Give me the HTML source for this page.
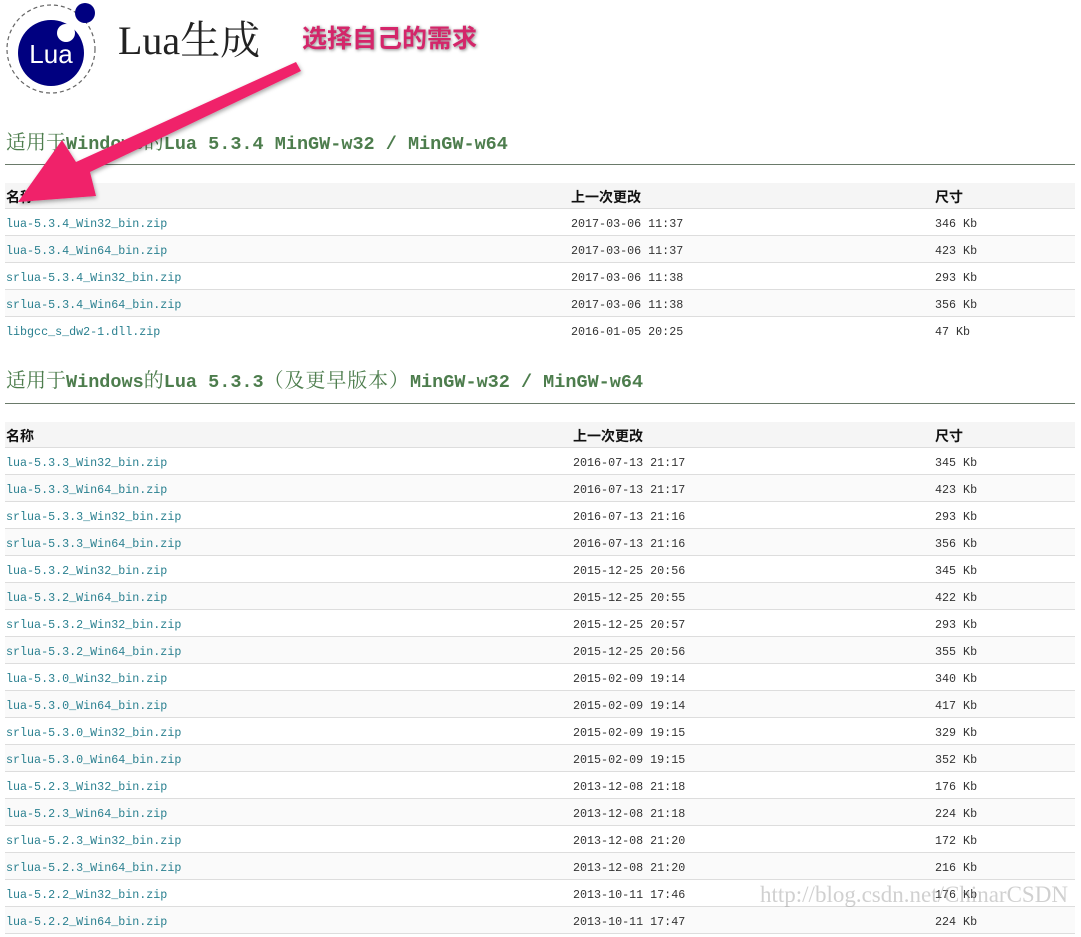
<!DOCTYPE html>
<html><head><meta charset="utf-8"><style>
body{margin:0;width:1081px;height:918px;background:#fff;position:relative;overflow:hidden;font-family:"Liberation Mono","Noto Sans CJK SC",monospace}
.a{position:absolute}
.h{font-family:"Liberation Mono","Noto Serif CJK SC",monospace;color:#4d7d4d;font-size:18.5px;font-weight:bold;left:6px;white-space:nowrap;letter-spacing:0}
.h i{font-style:normal;font-weight:normal;font-size:20px}
.h b{font-weight:normal;font-size:20px;letter-spacing:0.9px}
.hr{left:5px;width:1070px;height:1px;background:#6a7a6a}
.th{left:5px;width:1070px;height:25px;background:#f5f5f5;border-bottom:1px solid #ddd;font-family:"Noto Sans CJK SC",sans-serif;font-size:14px;font-weight:bold;color:#111}
.th span,.r span{position:absolute;top:0;white-space:nowrap}
.r span{line-height:30px}
.th span{font-weight:bold;line-height:28px}
.r{left:5px;width:1070px;height:26px;border-bottom:1px solid #ddd;font-size:11.7px;color:#333}
.r span:first-child{color:#2a8090}
</style></head><body>
<svg class="a" style="left:0;top:0" width="110" height="100">
<circle cx="51" cy="49" r="44" fill="none" stroke="#666" stroke-width="1.2" stroke-dasharray="4 3"/>
<circle cx="51" cy="53" r="33" fill="#000080"/>
<circle cx="66" cy="33" r="9" fill="#fff"/>
<circle cx="85" cy="13" r="10" fill="#000080"/>
<text x="51" y="63" text-anchor="middle" font-family="Liberation Sans,sans-serif" font-size="26" fill="#fff">Lua</text>
</svg>
<div class="a" style="left:118px;top:16px;font-family:'Liberation Serif','Noto Serif CJK SC',serif;font-size:40px;color:#222;line-height:50px">Lua生成</div>
<div class="a" style="left:302px;top:20px;font-family:'Noto Sans CJK SC',sans-serif;font-weight:bold;font-size:25px;color:#d4266a;line-height:34px;text-shadow:1px 1px 3px #888">选择自己的需求</div>

<div class="a h" style="top:132px;line-height:26px"><i>适用于</i>Windows<i>的</i>Lua 5.3.4 MinGW-w32 / MinGW-w64</div>
<div class="a hr" style="top:164px"></div>
<div class="a th" style="top:183px"><span style="left:1px">名称</span><span style="left:566px">上一次更改</span><span style="left:930px">尺寸</span></div>
<div class="a" style="left:0;top:209px">
<div class="r a" style="top:0"><span style="left:1px">lua-5.3.4_Win32_bin.zip</span><span style="left:566px">2017-03-06 11:37</span><span style="left:930px">346 Kb</span></div>
<div class="r a" style="top:27px;background:#fafafa"><span style="left:1px">lua-5.3.4_Win64_bin.zip</span><span style="left:566px">2017-03-06 11:37</span><span style="left:930px">423 Kb</span></div>
<div class="r a" style="top:54px"><span style="left:1px">srlua-5.3.4_Win32_bin.zip</span><span style="left:566px">2017-03-06 11:38</span><span style="left:930px">293 Kb</span></div>
<div class="r a" style="top:81px;background:#fafafa"><span style="left:1px">srlua-5.3.4_Win64_bin.zip</span><span style="left:566px">2017-03-06 11:38</span><span style="left:930px">356 Kb</span></div>
<div class="r a" style="top:108px;border-bottom:none"><span style="left:1px">libgcc_s_dw2-1.dll.zip</span><span style="left:566px">2016-01-05 20:25</span><span style="left:930px">47 Kb</span></div>
</div>

<div class="a h" style="top:370px;line-height:26px"><i>适用于</i>Windows<i>的</i>Lua 5.3.3<b>（及更早版本）</b>MinGW-w32 / MinGW-w64</div>
<div class="a hr" style="top:403px"></div>
<div class="a th" style="top:422px"><span style="left:1px">名称</span><span style="left:568px">上一次更改</span><span style="left:930px">尺寸</span></div>
<div class="a" style="left:0;top:448px">
<div class="r a" style="top:0"><span style="left:1px">lua-5.3.3_Win32_bin.zip</span><span style="left:568px">2016-07-13 21:17</span><span style="left:930px">345 Kb</span></div>
<div class="r a" style="top:27px;background:#fafafa"><span style="left:1px">lua-5.3.3_Win64_bin.zip</span><span style="left:568px">2016-07-13 21:17</span><span style="left:930px">423 Kb</span></div>
<div class="r a" style="top:54px"><span style="left:1px">srlua-5.3.3_Win32_bin.zip</span><span style="left:568px">2016-07-13 21:16</span><span style="left:930px">293 Kb</span></div>
<div class="r a" style="top:81px;background:#fafafa"><span style="left:1px">srlua-5.3.3_Win64_bin.zip</span><span style="left:568px">2016-07-13 21:16</span><span style="left:930px">356 Kb</span></div>
<div class="r a" style="top:108px"><span style="left:1px">lua-5.3.2_Win32_bin.zip</span><span style="left:568px">2015-12-25 20:56</span><span style="left:930px">345 Kb</span></div>
<div class="r a" style="top:135px;background:#fafafa"><span style="left:1px">lua-5.3.2_Win64_bin.zip</span><span style="left:568px">2015-12-25 20:55</span><span style="left:930px">422 Kb</span></div>
<div class="r a" style="top:162px"><span style="left:1px">srlua-5.3.2_Win32_bin.zip</span><span style="left:568px">2015-12-25 20:57</span><span style="left:930px">293 Kb</span></div>
<div class="r a" style="top:189px;background:#fafafa"><span style="left:1px">srlua-5.3.2_Win64_bin.zip</span><span style="left:568px">2015-12-25 20:56</span><span style="left:930px">355 Kb</span></div>
<div class="r a" style="top:216px"><span style="left:1px">lua-5.3.0_Win32_bin.zip</span><span style="left:568px">2015-02-09 19:14</span><span style="left:930px">340 Kb</span></div>
<div class="r a" style="top:243px;background:#fafafa"><span style="left:1px">lua-5.3.0_Win64_bin.zip</span><span style="left:568px">2015-02-09 19:14</span><span style="left:930px">417 Kb</span></div>
<div class="r a" style="top:270px"><span style="left:1px">srlua-5.3.0_Win32_bin.zip</span><span style="left:568px">2015-02-09 19:15</span><span style="left:930px">329 Kb</span></div>
<div class="r a" style="top:297px;background:#fafafa"><span style="left:1px">srlua-5.3.0_Win64_bin.zip</span><span style="left:568px">2015-02-09 19:15</span><span style="left:930px">352 Kb</span></div>
<div class="r a" style="top:324px"><span style="left:1px">lua-5.2.3_Win32_bin.zip</span><span style="left:568px">2013-12-08 21:18</span><span style="left:930px">176 Kb</span></div>
<div class="r a" style="top:351px;background:#fafafa"><span style="left:1px">lua-5.2.3_Win64_bin.zip</span><span style="left:568px">2013-12-08 21:18</span><span style="left:930px">224 Kb</span></div>
<div class="r a" style="top:378px"><span style="left:1px">srlua-5.2.3_Win32_bin.zip</span><span style="left:568px">2013-12-08 21:20</span><span style="left:930px">172 Kb</span></div>
<div class="r a" style="top:405px;background:#fafafa"><span style="left:1px">srlua-5.2.3_Win64_bin.zip</span><span style="left:568px">2013-12-08 21:20</span><span style="left:930px">216 Kb</span></div>
<div class="r a" style="top:432px"><span style="left:1px">lua-5.2.2_Win32_bin.zip</span><span style="left:568px">2013-10-11 17:46</span><span style="left:930px">176 Kb</span></div>
<div class="r a" style="top:459px;background:#fafafa"><span style="left:1px">lua-5.2.2_Win64_bin.zip</span><span style="left:568px">2013-10-11 17:47</span><span style="left:930px">224 Kb</span></div>
</div>

<svg class="a" style="left:0;top:0" width="320" height="230">
<defs><filter id="s"><feDropShadow dx="1" dy="2" stdDeviation="2" flood-color="#000" flood-opacity="0.35"/></filter></defs>
<polygon filter="url(#s)" fill="#f0216a" points="296,62 301,71 90,172 96,196 18,202 62,140 76,162"/>
</svg>
<div class="a" style="left:760px;top:882px;font-family:'Liberation Serif',serif;font-size:23px;color:rgba(150,150,150,0.45);white-space:nowrap">http://blog.csdn.net/ChinarCSDN</div>
</body></html>
